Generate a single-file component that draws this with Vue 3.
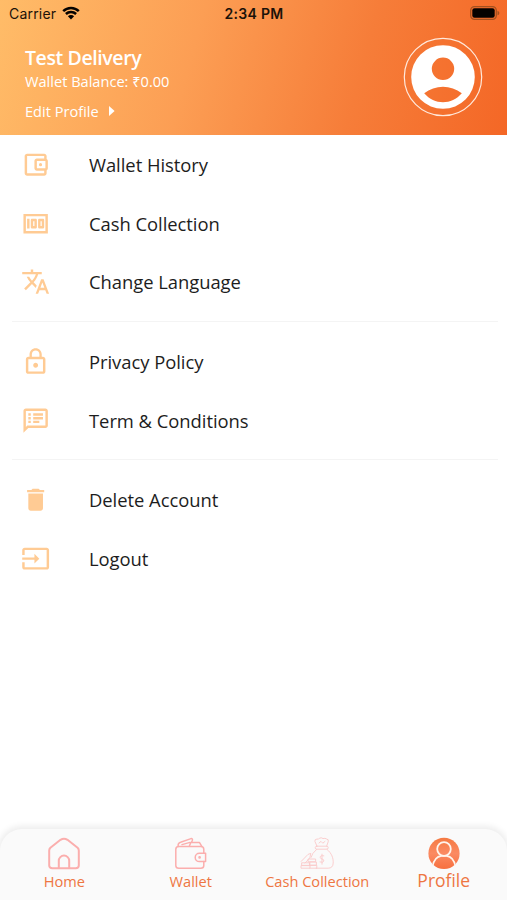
<script setup>
const groups = [
  [
    {
      label: 'Wallet History',
      icon: 'M21 7.28V5c0-1.1-.9-2-2-2H5c-1.11 0-2 .9-2 2v14c0 1.1.89 2 2 2h14c1.1 0 2-.9 2-2v-2.28A2 2 0 0 0 22 15V9a2 2 0 0 0-1-1.72zM20 9v6h-7V9h7zM5 19V5h14v2h-6c-1.1 0-2 .9-2 2v6c0 1.1.9 2 2 2h6v2H5zM14.7 12a1.3 1.3 0 1 0 2.6 0a1.3 1.3 0 1 0-2.6 0z',
    },
    {
      label: 'Cash Collection',
      icon: 'M15 16h3c.55 0 1-.45 1-1V9c0-.55-.45-1-1-1h-3c-.55 0-1 .45-1 1v6c0 .55.45 1 1 1zm1-6h1v4h-1v-4zm-7 6h3c.55 0 1-.45 1-1V9c0-.55-.45-1-1-1H9c-.55 0-1 .45-1 1v6c0 .55.45 1 1 1zm1-6h1v4h-1v-4zM5 8h2v8H5zM2 4v16h20V4H2zm2 14V6h16v12H4z',
    },
    {
      label: 'Change Language',
      icon: 'M12.87 15.07l-2.54-2.51.03-.03c1.74-1.94 2.98-4.17 3.71-6.53H17V4h-7V2H8v2H1v1.99h11.17C11.5 7.92 10.44 9.75 9 11.35 8.07 10.32 7.3 9.19 6.69 8h-2c.73 1.63 1.73 3.17 2.98 4.56l-5.09 5.02L4 19l5-5 3.11 3.11.76-2.04zM18.5 10h-2L12 22h2l1.12-3h4.75L21 22h2l-4.5-12zm-2.62 7l1.62-4.33L19.12 17h-3.24z',
    },
  ],
  [
    {
      label: 'Privacy Policy',
      icon: 'M12 17c1.1 0 2-.9 2-2s-.9-2-2-2-2 .9-2 2 .9 2 2 2zm6-9h-1V6c0-2.76-2.24-5-5-5S7 3.24 7 6v2H6c-1.1 0-2 .9-2 2v10c0 1.1.9 2 2 2h12c1.1 0 2-.9 2-2V10c0-1.1-.9-2-2-2zM8.9 6c0-1.71 1.39-3.1 3.1-3.1s3.1 1.39 3.1 3.1v2H8.9V6zM18 20H6V10h12v10z',
    },
    {
      label: 'Term & Conditions',
      icon: 'M20 2H4c-1.1 0-1.99.9-1.99 2L2 22l4-4h14c1.1 0 2-.9 2-2V4c0-1.1-.9-2-2-2zm0 14H5.17L4 17.17V4h16v12zM6 12h2v2H6zm0-3h2v2H6zm0-3h2v2H6zm4 6h5v2h-5zm0-3h8v2h-8zm0-3h8v2h-8z',
    },
  ],
  [
    {
      label: 'Delete Account',
      icon: 'M6 19c0 1.1.9 2 2 2h8c1.1 0 2-.9 2-2V7H6v12zM19 4h-3.5l-1-1h-5l-1 1H5v2h14V4z',
    },
    {
      label: 'Logout',
      icon: 'M21 3.01H3c-1.1 0-2 .9-2 2V9h2V4.99h18v14.03H3V15H1v4.01c0 1.1.9 1.98 2 1.98h18c1.1 0 2-.88 2-1.98v-14c0-1.11-.9-2-2-2zM11 16l4-4-4-4v3H1v2h10v3z',
    },
  ],
]
</script>

<template>
  <div class="screen">
    <header class="header">
      <div class="status">
        <div class="carrier">
          <span>Carrier</span>
          <svg class="wifi" viewBox="0 0 18 14">
            <path d="M1.2 5.2a11.2 11.2 0 0 1 15.6 0" />
            <path d="M3.9 8a7.3 7.3 0 0 1 10.2 0" />
            <path class="fill" d="M9 13.4L5.9 10.2a4.4 4.4 0 0 1 6.2 0z" />
          </svg>
        </div>
        <div class="time">2:34 PM</div>
        <div class="power">
          <svg class="battery" viewBox="0 0 31 14">
            <rect class="shell" x="0.7" y="0.7" width="25.6" height="12.6" rx="3.8" />
            <rect x="2.3" y="2.3" width="22.4" height="9.4" rx="2.2" />
            <path class="tip" d="M27.5 4.7c2.4.9 2.4 3.7 0 4.6z" />
          </svg>
        </div>
      </div>
      <div class="user">
        <div class="details">
          <div class="name">Test Delivery</div>
          <div class="balance">Wallet Balance: ₹0.00</div>
          <div class="edit">
            <span>Edit Profile</span>
            <svg class="caret" viewBox="0 0 6 10"><path d="M0 0l5.6 5L0 10z" /></svg>
          </div>
        </div>
        <svg class="avatar" viewBox="0 0 80 80">
          <circle class="ring" cx="40" cy="40" r="38.7" />
          <path
            fill-rule="evenodd"
            d="M40 8.2a31.8 31.8 0 1 0 0 63.6a31.8 31.8 0 1 0 0-63.6zM40 20.6a11.2 11.2 0 1 1 0 22.4a11.2 11.2 0 1 1 0-22.4zM21.2 56.3C32 47.4 48 47.4 58.8 56.3C48.7 68.3 31.3 68.3 21.2 56.3z"
          />
        </svg>
      </div>
    </header>

    <main class="menu">
      <section v-for="(group, i) in groups" :key="i" class="group">
        <div v-for="item in group" :key="item.label" class="row">
          <svg class="icon" viewBox="0 0 24 24"><path :d="item.icon" /></svg>
          <span class="label">{{ item.label }}</span>
        </div>
      </section>
    </main>

    <nav class="tabs">
      <div class="tab">
        <svg class="tab-icon" viewBox="0 0 34 34">
          <path d="M2.2 13.4Q2.2 11.8 3.4 10.7L13.5 2.8Q17 0.6 20.5 2.8L30.6 10.7Q31.8 11.8 31.8 13.4V28.5Q31.8 31.2 28.7 31.2H5.3Q2.2 31.2 2.2 28.5z" />
          <path d="M11.8 31V23.8a5.2 5.2 0 0 1 10.4 0V31" />
        </svg>
        <span>Home</span>
      </div>
      <div class="tab">
        <svg class="tab-icon wallet" viewBox="0 0 34 34">
          <path d="M29.8 16V12.4Q29.8 9.6 27 9.6H4.6Q1.8 9.6 1.8 12.4V28.4Q1.8 31.2 4.8 31.2H26.8Q29.8 31.2 29.8 28.4V24.6" />
          <path d="M31.6 16.2H25.4a4.2 4.2 0 0 0 0 8.4H31.6z" />
          <circle cx="25.6" cy="20.4" r="0.6" />
          <path d="M4.2 9.4Q3.6 6 6.6 5.2L17 1.6Q18.8 1.4 18.4 3.2L17.6 5M15.4 9L16.8 5.4H25.4L27.8 9.4M8 7.6L16 5.4" />
        </svg>
        <span>Wallet</span>
      </div>
      <div class="tab">
        <svg class="tab-icon cash" viewBox="0 0 34 34">
          <path d="M17 9.2L14.9 4.4Q14.5 2.2 17 2Q18.6 2.8 19.4 1.2Q21.5 0.2 23 1.6Q25 0.8 26.6 2Q29 2.2 28.2 4.8L26.6 9.2M19 6L21 4.4L22.8 6.2L25 4.4" />
          <rect x="15.2" y="9.2" width="13" height="3" rx="1.5" />
          <path d="M16.6 12.4Q11.8 16.4 11 20.4M27 12.4C32 16.4 33.4 21.4 33.2 26Q33 31.2 28 31.2H16.2" />
          <path d="M23.8 18.8Q19.9 18.2 20.2 20.4Q20.3 21.7 22.1 22Q24 22.4 23.9 24Q23.4 26 20 25M22 17.2V27.2" />
          <path d="M1.2 24.4L8 17.4L10.8 16.4L9.8 21L5 26M2 25.8H9.6V28.4H2zM3 28.6H10V31.2H1V29zM8.4 22H15.6V24.8H8.4zM10.2 25H16.4V28.2H10.2zM10 28.4H16.8V31.2H10" />
        </svg>
        <span>Cash Collection</span>
      </div>
      <div class="tab active">
        <svg class="tab-icon profile" viewBox="0 0 34 34">
          <defs>
            <linearGradient id="profile-fill" x1="0" y1="0" x2="0" y2="1">
              <stop offset="0" stop-color="#f57a42" />
              <stop offset="0.5" stop-color="#fb8a62" />
              <stop offset="1" stop-color="#f7703f" />
            </linearGradient>
            <clipPath id="profile-clip"><circle cx="17" cy="16.4" r="15.6" /></clipPath>
          </defs>
          <circle class="disc" cx="17" cy="16.4" r="15.6" />
          <g clip-path="url(#profile-clip)">
            <circle class="line" cx="17" cy="12" r="6.8" />
            <path class="line" d="M5.6 29.4Q7.4 19.8 14.4 18.9H19.6Q26.6 19.8 28.4 29.4" />
          </g>
        </svg>
        <span>Profile</span>
      </div>
    </nav>
  </div>
</template>

<style>
body {
  margin: 0;
  background: #fff;
}
</style>

<style scoped>
.screen {
  display: flex;
  flex-direction: column;
  width: 507px;
  height: 900px;
  overflow: hidden;
  background: #fff;
  font-family: 'Open Sans', 'Noto Sans', sans-serif;
}

.header {
  box-sizing: border-box;
  height: 135px;
  background: linear-gradient(105deg, #ffbc68 0%, #fc9e54 38%, #f67d39 70%, #f46726 100%);
  color: #fff;
}

.status {
  display: grid;
  grid-template-columns: 1fr auto 1fr;
  align-items: center;
  height: 27px;
  padding: 0 8px 0 9px;
  color: #1c1209;
  font: 500 13.5px/27px Inter, sans-serif;
}

.carrier {
  display: flex;
  align-items: center;
  gap: 6px;
  font-weight: 400;
  font-size: 14px;
  letter-spacing: 0.2px;
}

.wifi {
  width: 18px;
  height: 14px;
  margin-top: -1px;
  fill: none;
  stroke: #050200;
  stroke-width: 2.5;
}

.wifi .fill {
  fill: #050200;
  stroke: none;
}

.time {
  font-weight: 600;
  font-size: 14px;
  letter-spacing: 0.3px;
}

.power {
  display: flex;
  justify-content: flex-end;
  margin-top: -1px;
  margin-right: -2px;
}

.battery {
  width: 31px;
  height: 14px;
  fill: #050200;
}

.battery .shell {
  fill: none;
  stroke: #a3501f;
  stroke-width: 1.3;
}

.battery .tip {
  fill: #a3501f;
}

.user {
  display: flex;
  justify-content: space-between;
  padding: 10px 24px 0 25px;
}

.details {
  padding-top: 8px;
}

.name {
  font-weight: 600;
  font-size: 19.5px;
  line-height: 25px;
  letter-spacing: -0.4px;
}

.balance {
  font-size: 14.6px;
  line-height: 22px;
}

.edit {
  display: flex;
  align-items: center;
  gap: 10px;
  margin-top: 8px;
  font-size: 14.6px;
  line-height: 22px;
}

.caret {
  width: 6px;
  height: 10px;
  margin-top: -1px;
  fill: #fff;
}

.avatar {
  width: 80px;
  height: 80px;
  fill: #fff;
}

.avatar .ring {
  fill: none;
  stroke: #ffe9dc;
  stroke-width: 1.2;
}

.menu {
  flex: 1;
  padding: 1px 9px 0 12px;
}

.group + .group {
  margin-top: 9.5px;
  padding-top: 10.5px;
  border-top: 1px solid #f4f4f4;
}

.row {
  display: flex;
  align-items: center;
  gap: 38.7px;
  height: 58.6px;
  padding-left: 9px;
}

.icon {
  width: 29.3px;
  height: 29.3px;
  margin-top: -1px;
  fill: #ffcb94;
}

.label {
  color: #1d1d1d;
  font-size: 18.4px;
  line-height: 28px;
  letter-spacing: -0.03px;
}

.tabs {
  box-sizing: border-box;
  display: grid;
  grid-template-columns: repeat(4, 1fr);
  height: 71px;
  padding: 8px 0 0 1px;
  border-radius: 22px 22px 0 0;
  background: #fafafa;
  box-shadow: 0 -1px 6px 2px #ededed;
}

.tab {
  display: flex;
  flex-direction: column;
  align-items: center;
  color: #ee7642;
  font-size: 14.6px;
  line-height: 22px;
  white-space: nowrap;
}

.tab-icon {
  width: 34px;
  height: 34px;
  margin-bottom: -1px;
  fill: none;
  stroke: #fbaead;
  stroke-width: 2;
  stroke-linejoin: round;
  stroke-linecap: round;
}

.wallet {
  stroke-width: 1.5;
}

.cash {
  stroke: #fbcaca;
  stroke-width: 0.9;
}

.profile .disc {
  fill: url(#profile-fill);
  stroke: none;
}

.profile .line {
  stroke: #fff4ec;
  stroke-width: 1.8;
}

.active {
  font-size: 17.5px;
}

.active .tab-icon {
  margin-bottom: -2px;
}
</style>
